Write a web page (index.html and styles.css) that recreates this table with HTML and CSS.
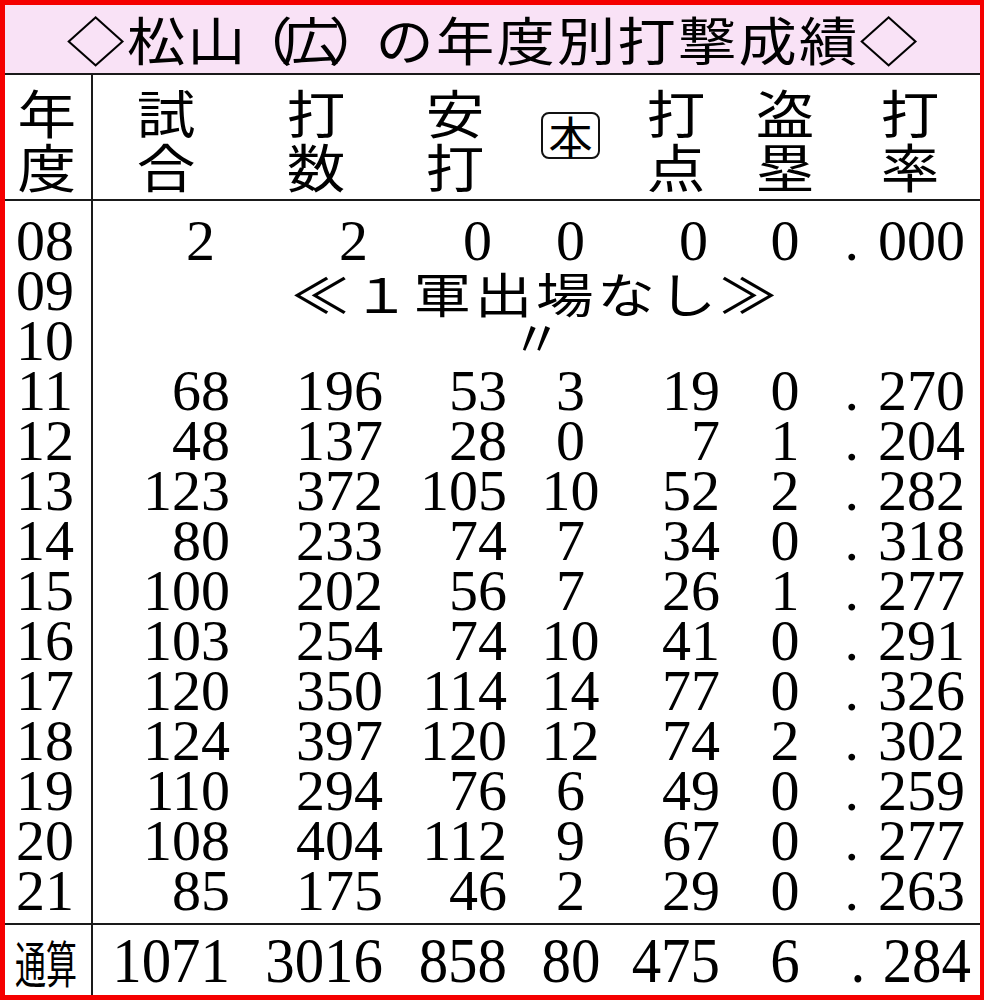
FILE: index.html
```html
<!DOCTYPE html>
<html lang="ja">
<head>
<meta charset="utf-8">
<title>松山(広)の年度別打撃成績</title>
<link rel="stylesheet" href="styles.css">
</head>
<body>
<div class="frame">
  <div class="title"><span class="title-text">◇松山<span class="paren">（</span>広<span class="paren">）</span>の年度別打撃成績◇</span></div>

  <div class="section head">
    <div class="ycol"><span class="hk">年<br>度</span></div>
    <div class="cols">
      <div class="hc"><span class="hk">試<br>合</span></div>
      <div class="hc"><span class="hk">打<br>数</span></div>
      <div class="hc"><span class="hk">安<br>打</span></div>
      <div class="hc"><span class="hon">本</span></div>
      <div class="hc"><span class="hk">打<br>点</span></div>
      <div class="hc"><span class="hk">盗<br>塁</span></div>
      <div class="hc"><span class="hk">打<br>率</span></div>
    </div>
  </div>

  <div class="section body">
    <div class="ycol years">
      <div>08</div><div>09</div><div>10</div><div>11</div><div>12</div><div>13</div><div>14</div>
      <div>15</div><div>16</div><div>17</div><div>18</div><div>19</div><div>20</div><div>21</div>
    </div>
    <div class="cols rows">
      <div class="r c1 first">2</div><div class="r c2 first">2</div><div class="r c3 first">0</div><div class="c c4">0</div><div class="r c5 first">0</div><div class="c c6">0</div><div class="r c7"><span class="pt">.</span>000</div>
      <div class="span none"><span class="none-text">≪１軍出場なし≫</span></div>
      <div class="span ditto"><span class="ditto-mark">〃</span></div>
      <div class="r c1">68</div><div class="r c2">196</div><div class="r c3">53</div><div class="c c4">3</div><div class="r c5">19</div><div class="c c6">0</div><div class="r c7"><span class="pt">.</span>270</div>
      <div class="r c1">48</div><div class="r c2">137</div><div class="r c3">28</div><div class="c c4">0</div><div class="r c5">7</div><div class="c c6">1</div><div class="r c7"><span class="pt">.</span>204</div>
      <div class="r c1">123</div><div class="r c2">372</div><div class="r c3">105</div><div class="c c4">10</div><div class="r c5">52</div><div class="c c6">2</div><div class="r c7"><span class="pt">.</span>282</div>
      <div class="r c1">80</div><div class="r c2">233</div><div class="r c3">74</div><div class="c c4">7</div><div class="r c5">34</div><div class="c c6">0</div><div class="r c7"><span class="pt">.</span>318</div>
      <div class="r c1">100</div><div class="r c2">202</div><div class="r c3">56</div><div class="c c4">7</div><div class="r c5">26</div><div class="c c6">1</div><div class="r c7"><span class="pt">.</span>277</div>
      <div class="r c1">103</div><div class="r c2">254</div><div class="r c3">74</div><div class="c c4">10</div><div class="r c5">41</div><div class="c c6">0</div><div class="r c7"><span class="pt">.</span>291</div>
      <div class="r c1">120</div><div class="r c2">350</div><div class="r c3">114</div><div class="c c4">14</div><div class="r c5">77</div><div class="c c6">0</div><div class="r c7"><span class="pt">.</span>326</div>
      <div class="r c1">124</div><div class="r c2">397</div><div class="r c3">120</div><div class="c c4">12</div><div class="r c5">74</div><div class="c c6">2</div><div class="r c7"><span class="pt">.</span>302</div>
      <div class="r c1">110</div><div class="r c2">294</div><div class="r c3">76</div><div class="c c4">6</div><div class="r c5">49</div><div class="c c6">0</div><div class="r c7"><span class="pt">.</span>259</div>
      <div class="r c1">108</div><div class="r c2">404</div><div class="r c3">112</div><div class="c c4">9</div><div class="r c5">67</div><div class="c c6">0</div><div class="r c7"><span class="pt">.</span>277</div>
      <div class="r c1">85</div><div class="r c2">175</div><div class="r c3">46</div><div class="c c4">2</div><div class="r c5">29</div><div class="c c6">0</div><div class="r c7"><span class="pt">.</span>263</div>
    </div>
  </div>

  <div class="section foot">
    <div class="ycol"><span class="total">通算</span></div>
    <div class="cols">
      <div class="r c1"><span class="fn">1071</span></div>
      <div class="r c2"><span class="fn">3016</span></div>
      <div class="r c3"><span class="fn">858</span></div>
      <div class="c c4"><span class="fn fc">80</span></div>
      <div class="r c5"><span class="fn">475</span></div>
      <div class="c c6"><span class="fn fc">6</span></div>
      <div class="r c7 fend"><span class="fn"><span class="pt">.</span>284</span></div>
    </div>
  </div>
</div>
</body>
</html>
```

FILE: styles.css
```css
* {
  box-sizing: border-box;
  margin: 0;
  padding: 0;
}

html, body {
  background: #ffffff;
}

body {
  width: 984px;
  height: 1000px;
  overflow: hidden;
  color: #000;
}

.frame {
  width: 984px;
  height: 1000px;
  border-style: solid;
  border-color: #f50000;
  border-width: 5px 4px 5px 5px;
  display: flex;
  flex-direction: column;
}

/* title bar */
.title {
  height: 70px;
  flex: none;
  background: #f9e2f6;
  border-bottom: 2px solid #1a1a1a;
  display: flex;
  align-items: center;
  justify-content: center;
  font-family: "Noto Sans CJK JP", "Noto Sans", sans-serif;
  font-size: 52px;
  line-height: 1;
}

.title-text {
  display: inline-block;
  letter-spacing: 2px;
  transform: scaleX(1.12);
  white-space: nowrap;
  padding-left: 2px;
}

.paren {
  margin: 0 -12px;
}

/* shared column system */
.section {
  display: flex;
  flex: none;
}

.ycol {
  width: 88px;
  flex: none;
  border-right: 2px solid #1a1a1a;
  display: flex;
  flex-direction: column;
  align-items: center;
  justify-content: center;
}

.cols {
  flex: 1;
  display: grid;
  grid-template-columns: 147px 153px 124px 106px 107px 110px 140px;
}

/* header */
.head {
  height: 126px;
  border-bottom: 2px solid #1a1a1a;
}

.head .cols {
  align-items: center;
}

.hc {
  display: flex;
  justify-content: center;
  align-items: center;
}

.hk {
  display: inline-block;
  font-family: "Noto Sans CJK JP", "Noto Sans", sans-serif;
  font-size: 48px;
  line-height: 50px;
  text-align: center;
  transform: scale(1.22, 1.08);
  margin-top: 2px;
}

.ycol .hk {
  padding-right: 2px;
}

.hon {
  display: flex;
  align-items: center;
  justify-content: center;
  width: 59px;
  height: 47px;
  border: 2.5px solid #111;
  border-radius: 8px;
  font-family: "Noto Sans CJK JP", "Noto Sans", sans-serif;
  font-size: 44px;
  line-height: 1;
  margin-top: -4px;
  margin-left: 1px;
}

/* body */
.body {
  flex: 1;
}

.body .ycol,
.body .cols {
  padding-top: 15px;
  padding-bottom: 7px;
}

.years {
  justify-content: flex-start;
  font-family: "Liberation Serif", "Times New Roman", serif;
  font-size: 58px;
  line-height: 50px;
  padding-right: 6px;
}

.rows {
  grid-auto-rows: 50px;
  align-content: start;
  font-family: "Liberation Serif", "Times New Roman", serif;
  font-size: 58px;
  line-height: 50px;
}

.r {
  text-align: right;
  padding-right: 10px;
  white-space: nowrap;
}

.c {
  text-align: center;
  white-space: nowrap;
}

.c4 {
  padding-left: 1px;
}

.c7 {
  padding-right: 15px;
}

.pt {
  margin-right: 19px;
}

.rows .first {
  padding-right: 25px;
}

.rows .c5.first {
  padding-right: 22px;
}

.span {
  grid-column: 1 / -1;
  text-align: center;
}

.none-text {
  display: inline-block;
  font-family: "Noto Sans CJK JP", "Noto Sans", sans-serif;
  font-size: 48px;
  line-height: 50px;
  letter-spacing: 3px;
  transform: scaleX(1.2);
  white-space: nowrap;
  margin-top: 1px;
}

.ditto-mark {
  display: inline-block;
  font-family: "Noto Sans CJK JP", "Noto Sans", sans-serif;
  font-size: 50px;
  line-height: 40px;
  transform: translateY(-3px);
}

/* footer */
.foot {
  height: 72px;
  border-top: 2px solid #1a1a1a;
}

.foot .cols {
  align-items: center;
  font-family: "Liberation Serif", "Times New Roman", serif;
  font-size: 64px;
  line-height: 64px;
}

.fn {
  display: inline-block;
  transform: scaleX(0.92);
  transform-origin: right center;
  margin-top: 2px;
}

.fend {
  padding-right: 18px;
}

.fc {
  transform-origin: center center;
}

.total {
  display: inline-block;
  font-family: "Noto Sans CJK JP", "Noto Sans", sans-serif;
  font-size: 50px;
  line-height: 1;
  transform: scaleX(0.62);
  white-space: nowrap;
  margin-top: 2px;
  margin-left: -4px;
}
```
